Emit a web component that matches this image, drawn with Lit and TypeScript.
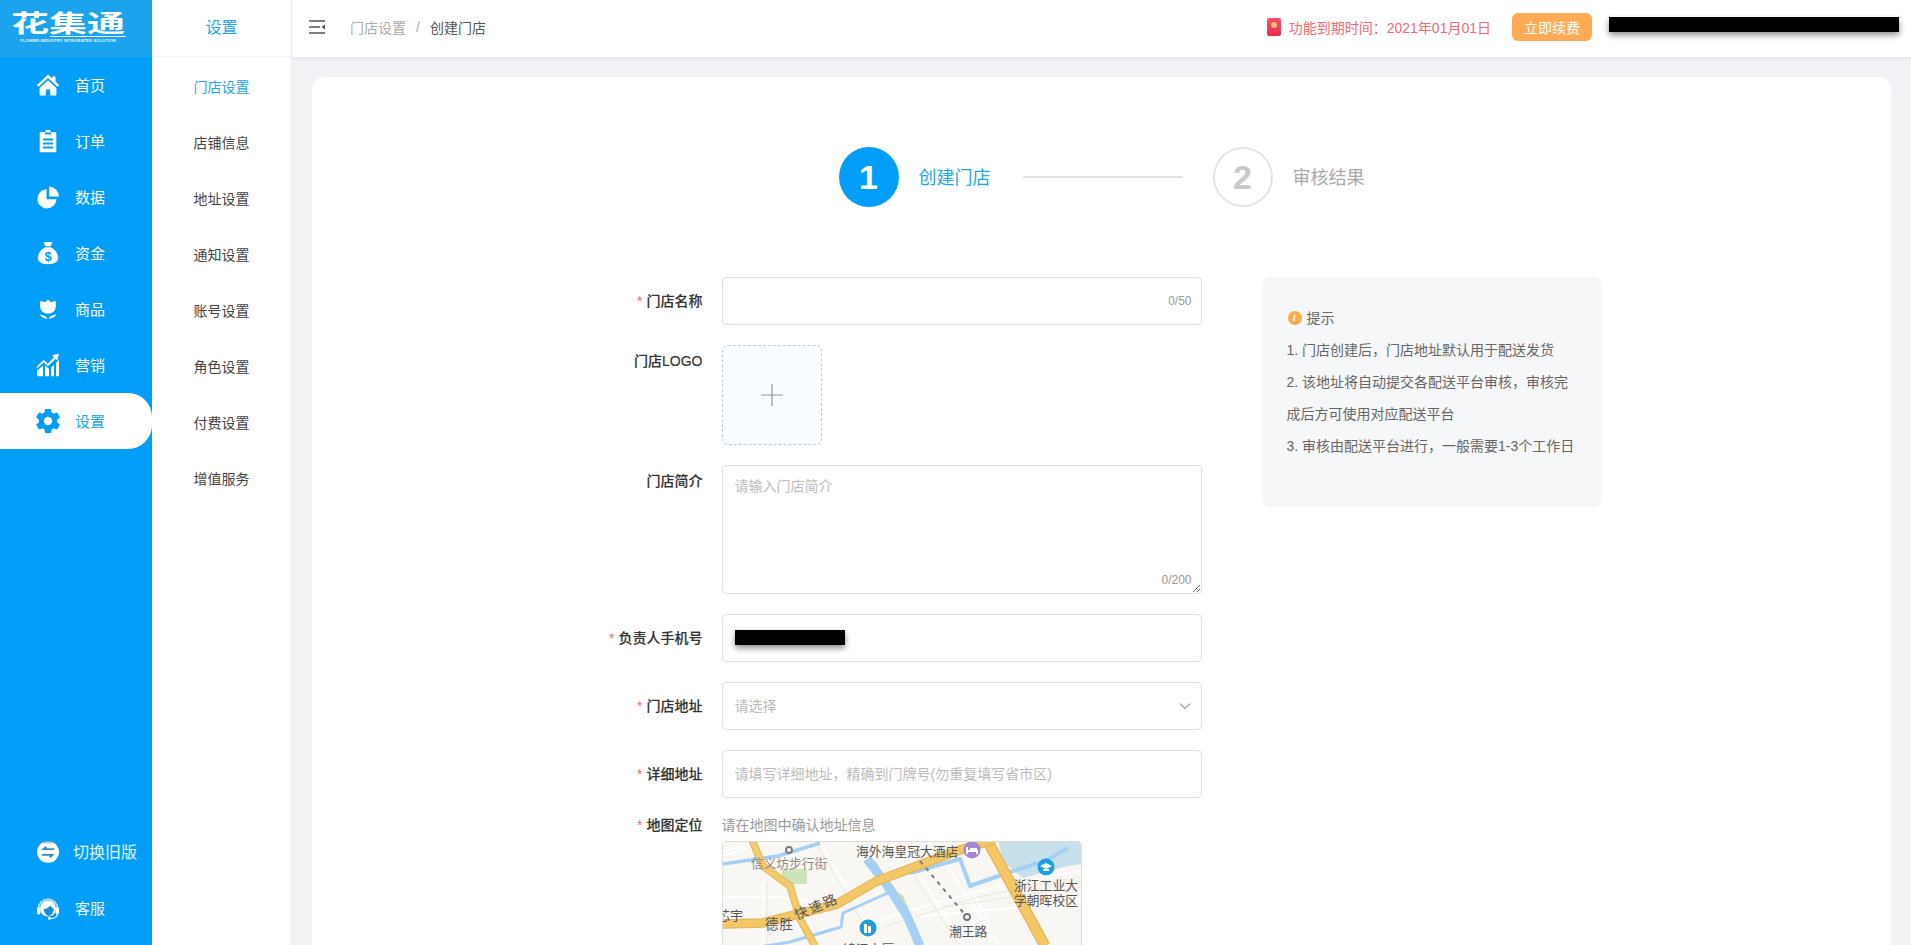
import { LitElement, html, css } from "lit";
import { customElement } from "lit/decorators.js";

const icons: Record<string, unknown> = {
  home: html`<svg viewBox="0 0 24 24" width="24" height="24" fill="#fff"><path d="M12 1.5 .8 12.2l1.7 1.6L12 5l9.5 8.8 1.7-1.6-3.7-3.6V3.4h-3.2v2.1z"/><path d="M12 7.3 3.6 15v6.4c0 .6.4 1 1 1h5.2v-6h4.4v6h5.2c.6 0 1-.4 1-1V15z"/></svg>`,
  order: html`<svg viewBox="0 0 24 24" width="24" height="24"><path fill="#fff" d="M9.5 3.2V2c0-.6.4-1 1-1h3c.6 0 1 .4 1 1v1.2h4.8c.6 0 1 .4 1 1v18c0 .6-.4 1-1 1H4.700c-.6 0-1-.4-1-1v-18c0-.6.4-1 1-1z"/><path stroke="#019ef9" stroke-width="1.800" d="M9 4.500h6M7 10.500h10M7 14.500h10M7 18.500h10" fill="none"/></svg>`,
  data: html`<svg viewBox="0 0 24 24" width="24" height="24" fill="#fff"><path d="M10.500 4.200a9.600 9.600 0 1 0 10 10h-10z"/><path d="M13 1.600v9.900h10A10.400 10.400 0 0 0 13 1.600z"/></svg>`,
  money: html`<svg viewBox="0 0 24 24" width="24" height="24"><path fill="#fff" d="M7.500 1h9l-1.800 4.200H9.300zM9 6.200h6c4 2.300 7.200 6.300 7.200 10.400 0 4.400-3.800 6.600-10.200 6.600S1.800 21 1.800 16.600C1.800 12.500 5 8.500 9 6.200z"/><text x="12" y="20.300" text-anchor="middle" font-family="Liberation Sans" font-weight="700" font-size="13" fill="#019ef9">$</text></svg>`,
  goods: html`<svg viewBox="0 0 24 24" width="24" height="24" fill="#fff"><path d="M12 2.500 15 5.200l4.500-1.400c.6 4 .6 7.400-.8 9.700-1.300 2-3.900 3.100-6.700 3.100s-5.400-1.100-6.700-3.100C3.900 11.200 3.900 7.800 4.500 3.800L9 5.200z"/><path d="M3.500 17.500c3 .2 5.800 1.300 7.500 3.300v1c-3-.4-5.800-1.900-7.500-4.300zM20.500 17.500c-3 .2-5.800 1.300-7.500 3.300v1c3-.4 5.800-1.900 7.500-4.300z"/></svg>`,
  market: html`<svg viewBox="0 0 24 24" width="24" height="24" fill="#fff"><path d="M23 .8 16 2.200l2 2-6.200 6.500-4-4L.8 13.400v2.400l7-6.500 4 4L19.700 5.800l1.700 1.700z"/><path d="M1 17.800 7 12.500v10.700H2a1 1 0 0 1-1-1zM9 12.500l4 3.300v7.400H9zM15 14.800l3-3v11.400h-3zM20 9.800l3-3v15.400a1 1 0 0 1-1 1h-2z"/></svg>`,
  gear: html`<svg viewBox="0 0 24 24" width="24" height="24" fill="#019ef9"><path d="M21.100 13.200a9.300 9.300 0 0 0 0-2.400l2.500-2a.7.7 0 0 0 .2-.8l-2.400-4.100a.7.7 0 0 0-.8-.3l-3 1.200a9 9 0 0 0-2-1.200L15.100.5a.6.600 0 0 0-.6-.5H9.600a.6.600 0 0 0-.6.500l-.5 3.100a9 9 0 0 0-2 1.200l-3-1.200a.6.600 0 0 0-.8.300L.3 8a.6.600 0 0 0 .2.800l2.500 2a9.300 9.300 0 0 0 0 2.400l-2.500 2a.7.7 0 0 0-.2.800l2.400 4.100c.2.300.5.400.8.300l3-1.200a9 9 0 0 0 2 1.200l.5 3.100c0 .3.300.5.600.5h4.900c.3 0 .6-.2.600-.5l.5-3.100a9 9 0 0 0 2-1.200l3 1.200c.3.100.6 0 .8-.3l2.400-4.100a.7.700 0 0 0-.2-.8zM12 16.200a4.200 4.200 0 1 1 0-8.400 4.200 4.200 0 0 1 0 8.400z"/></svg>`,
  swap: html`<svg viewBox="0 0 24 24" width="24" height="24"><defs><linearGradient id="sw" x1="0" y1="0" x2="0" y2="1"><stop offset="0" stop-color="#8c9aa5"/><stop offset=".15" stop-color="#fff"/><stop offset=".85" stop-color="#fff"/><stop offset="1" stop-color="#bdeeff"/></linearGradient></defs><circle cx="12" cy="12" r="11" fill="url(#sw)"/><path d="M18 9.200H7.500l2.800-2.600M6 14.800h10.500l-2.800 2.600" fill="none" stroke="#2a8fd0" stroke-width="1.800"/></svg>`,
  service: html`<svg viewBox="0 0 24 24" width="24" height="24"><path d="M2.300 13a9.700 9.700 0 0 1 19.400 0" fill="none" stroke="#cfe3ee" stroke-width="1.600"/><circle cx="12" cy="12.500" r="8" fill="#fff"/><path d="M7.800 13c2.600-.2 5-1.500 6.500-3.500 .8 1.500 2 2.600 3.500 3.200 0 3.800-2.400 6.800-5 7.300-2.700-.5-5-3.400-5-7z" fill="#1b8fd6"/><rect x="1" y="11" width="3.400" height="7.500" rx="1.600" fill="#fff"/><rect x="19.600" y="11" width="3.400" height="7.500" rx="1.600" fill="#fff"/><path d="M21.300 18.500c-.5 2.500-3.300 4-6.500 4" fill="none" stroke="#fff" stroke-width="1.200"/><circle cx="13.500" cy="22.300" r="1.500" fill="#fff"/></svg>`,
};

const NAV = [
  ["home", "首页"],
  ["order", "订单"],
  ["data", "数据"],
  ["money", "资金"],
  ["goods", "商品"],
  ["market", "营销"],
  ["gear", "设置"],
];
const SUB = ["门店设置", "店铺信息", "地址设置", "通知设置", "账号设置", "角色设置", "付费设置", "增值服务"];

const mapView = html`<svg class="map-svg" viewBox="0 0 360 300" width="360" height="300">
  <rect width="360" height="300" fill="#f9f7f3"/>
  <path d="M275 -2 L360 -2 L360 22 L345 24 L300 36 L280 20Z" fill="#c8e0ec"/>
  <g fill="none" stroke="#ffffff" stroke-width="2">
    <path d="M97 0 L150 90 L170 130"/><path d="M40 40 V130"/><path d="M0 55 L60 55 L120 62"/>
    <path d="M150 80 L250 50 L360 28"/><path d="M185 75 L360 60"/><path d="M195 30 L240 102"/><path d="M225 25 L275 102"/>
    <path d="M250 50 L265 80"/><path d="M285 45 L300 75"/><path d="M0 10 L30 0"/><path d="M0 14 L40 0"/>
  </g>
  <g fill="none" stroke="#ebe7de" stroke-width="1">
    <path d="M92 0 L145 90"/><path d="M44 40 V130"/><path d="M190 32 L235 102"/><path d="M160 85 L255 55 L360 34"/><path d="M220 65 L360 45"/>
  </g>
  <rect x="59" y="27" width="25" height="15" fill="#cfe3bb"/>
  <path d="M150 20 L165 48 L178 56 L196 100" fill="none" stroke="#c6e3a8" stroke-width="6"/>
  <g fill="none" stroke="#a5d0f5" stroke-linejoin="round">
    <path d="M0 22 L55 14 L97 1" stroke-width="3.500"/>
    <path d="M144 17 L167 47 L184 74 L197 104" stroke-width="9"/>
    <path d="M187 31 L237 17 L247 44 L284 31 L322 19 L345 6" stroke-width="4"/>
    <path d="M30 106 L67 100 L118 85 L120 71 L167 50" stroke-width="3"/>
  </g>
  <g fill="none" stroke-linecap="butt">
    <path d="M29 -2 L40 24 L67 44 L77 77 L92 104" stroke="#e3b354" stroke-width="7.500"/>
    <path d="M29 -2 L40 24 L67 44 L77 77 L92 104" stroke="#f3cb6c" stroke-width="5.500"/>
    <path d="M264 -2 L322 104" stroke="#e0ac4c" stroke-width="11"/>
    <path d="M264 -2 L322 104" stroke="#f3c766" stroke-width="9"/>
    <path d="M-2 82 L40 81 L114 62 L154 39 L234 9 L270 -2" stroke="#e3b354" stroke-width="9.500"/>
    <path d="M-2 82 L40 81 L114 62 L154 39 L234 9 L270 -2" stroke="#f3c766" stroke-width="7.500"/>
  </g>
  <path d="M197 19 L244 75" stroke="#7c7c7c" stroke-width="2" stroke-dasharray="4 5"/>
  <circle cx="66" cy="8" r="3" fill="#fff" stroke="#777" stroke-width="1.800"/>
  <circle cx="244" cy="75" r="3" fill="#fff" stroke="#777" stroke-width="1.800"/>
  <circle cx="249" cy="8" r="8.500" fill="#a884d8"/><path d="M244 5v7M244 9h10v3M247 7h7" stroke="#fff" stroke-width="2" fill="none"/>
  <circle cx="323" cy="25" r="8.500" fill="#1d9ee0"/><path d="M317 24l6-3 6 3-6 3zM320 27v2h6v-2" fill="#fff"/>
  <circle cx="145" cy="86" r="8.500" fill="#1a9fd8"/><path d="M141 91v-9h3v9zM145 91v-7h3v7z" fill="#fff"/>
  <g class="map-t">
    <text x="28" y="26" font-size="12.700" fill="#8a8a8a">信义坊步行街</text>
    <text x="133" y="14" font-size="12.800" fill="#555">海外海皇冠大酒店</text>
    <text x="226" y="94" font-size="12.800" fill="#555">潮王路</text>
    <text x="291" y="48" font-size="12.800" fill="#555">浙江工业大</text>
    <text x="291" y="63" font-size="12.800" fill="#555">学朝晖校区</text>
    <text x="-6" y="78" font-size="13" fill="#555">芯宇</text>
    <text x="42" y="87" font-size="13.500" fill="#555" letter-spacing="1">德胜</text>
    <text transform="translate(74 78) rotate(-23)" font-size="13.500" fill="#555" letter-spacing="2">快速路</text>
    <text x="120" y="112" font-size="12.800" fill="#555">锦江大厦</text>
  </g>
</svg>`;

@customElement("app-root")
export class AppRoot extends LitElement {
  static styles = css`
    :host { display: block; height: 100vh; overflow: hidden; font-family: "Liberation Sans", "Noto Sans CJK SC", sans-serif; color: #333; }
    * { box-sizing: border-box; }
    .app { display: flex; height: 100%; background: #f0f2f5; }
    .side { width: 152px; flex: none; background: #019ef9; display: flex; flex-direction: column; color: #fff; }
    .logo { height: 57px; flex: none; background: #1ca3ee; overflow: hidden; padding: 10px 0 0 11px; display: flex; flex-direction: column; }
    .logo-main { font: 700 38px/38px "Noto Sans CJK SC", sans-serif; transform: scaleY(.62); transform-origin: 50% 0; width: 116px; height: 25px; white-space: nowrap; }
    .logo-rule { height: 1px; width: 76px; background: #fff; margin: 1px 0 0 39px; }
    .logo-sub { font: 700 4.400px/6px "Liberation Sans", sans-serif; color: #dff3ff; white-space: nowrap; margin: 1px 0 0 9px; }
    .nav { flex: 1; }
    .item { height: 56px; display: flex; align-items: center; gap: 15px; padding-left: 36px; font-size: 15px; }
    .item span { padding-bottom: 2px; }
    .item svg { flex: none; }
    .item.on { background: #fff; color: #1fa6ef; border-radius: 0 24px 24px 0; }
    .bottom { padding-bottom: 9px; }
    .item.wide { font-size: 16px; gap: 13px; color: #e3f6ff; }
    .item.pale { color: #e3f6ff; }
    .sub { width: 140px; flex: none; background: #fff; border-right: 1px solid #f0f0f0; z-index: 1; }
    .sub-title { height: 57px; display: flex; align-items: center; justify-content: center; font-size: 16px; color: #1fa6ef; border-bottom: 1px solid #f2f3f5; margin-bottom: 2px; padding-bottom: 4px; }
    .sub-item { height: 56px; display: flex; align-items: center; justify-content: center; font-size: 14px; color: #444; padding-bottom: 2px; }
    .sub-item.on { color: #1fa6ef; }
    .right { flex: 1; min-width: 0; display: flex; flex-direction: column; height: 100%; }
    .head { height: 57px; flex: none; background: #fff; box-shadow: 0 1px 4px rgba(0, 0, 0, .08); display: flex; align-items: center; padding: 0 12px 3px 17px; font-size: 14px; z-index: 1; }
    .menu { display: block; margin-right: 25px; }
    .crumb-a { color: #aaa; }
    .crumb-s { color: #aaa; margin: 0 10px; }
    .crumb-b { color: #555; }
    .crumb-a, .crumb-s, .crumb-b, .expire { padding-bottom: 1px; }
    .grow { flex: 1; }
    .redbag { width: 14px; height: 18px; border-radius: 2px; background: linear-gradient(#f4526a, #ec2c4a); display: flex; justify-content: center; padding-top: 4px; margin-right: 8px; }
    .redbag i { width: 6px; height: 6px; border-radius: 50%; background: #f5c07a; }
    .expire { color: #ee6b77; }
    .renew { width: 80px; height: 28px; margin-left: 21px; border-radius: 6px; background: #ffab55; color: #fff; display: flex; align-items: center; justify-content: center; font-size: 14px; }
    .mask-top { width: 290px; height: 15px; margin: 0 0 5px 17px; background: #000; box-shadow: 0 3px 6px rgba(0, 0, 0, .45); }
    .main { flex: 1; min-height: 0; overflow: hidden; padding: 20px 20px 0; }
    .card { background: #fff; border-radius: 12px 12px 0 0; padding-top: 70px; min-height: 1000px; }
    .steps { display: flex; align-items: center; justify-content: center; height: 60px; margin-bottom: 70px; }
    .num { width: 60px; height: 60px; border-radius: 50%; display: flex; align-items: center; justify-content: center; font: 700 34px "Liberation Sans", sans-serif; }
    .num.a { background: #019ef9; color: #fff; }
    .num.b { border: 2px solid #e4e4e4; color: #c8c8c8; }
    .st { font-size: 18px; margin-left: 20px; padding-bottom: 2px; }
    .st.a { color: #1fa6ef; }
    .st.b { color: #aaa; }
    .line { width: 160px; height: 2px; background: #e2e2e2; margin: 0 30px 0 32px; }
    .body { width: 1000px; margin: 0 auto; display: flex; gap: 60px; align-items: flex-start; }
    .form { width: 600px; flex: none; display: flex; flex-direction: column; gap: 20px; }
    .row { display: flex; gap: 19px; }
    .label { width: 101px; flex: none; text-align: right; font-size: 14px; font-weight: 500; color: #333; line-height: 48px; -webkit-text-stroke: .15px #333; }
    .label.top { line-height: 32px; }
    .label.map { line-height: 14px; }
    .label em { font-style: normal; color: #f56c6c; margin-right: 4px; font-weight: 400; -webkit-text-stroke: 0; }
    .field { position: relative; width: 480px; height: 48px; }
    .field input, .field textarea { display: block; width: 100%; height: 100%; border: 1px solid #dcdfe6; border-radius: 4px; padding: 0 12px; font: inherit; font-size: 14px; background: #fff; color: #333; outline: none; }
    .field textarea { padding: 8px 12px; line-height: 24px; }
    .field.area { height: 129px; }
    input::placeholder, textarea::placeholder { color: #bbb; }
    .count { position: absolute; right: 10px; font-size: 12px; color: #999; }
    .count.c1 { top: 17px; }
    .count.c2 { bottom: 7px; }
    .upload { width: 100px; height: 100px; border: 1px dashed #c0ccda; border-radius: 6px; background: #fafdff; display: flex; align-items: center; justify-content: center; }
    .mask-phone { position: absolute; left: 13px; top: 16px; width: 110px; height: 15px; background: #000; box-shadow: 0 3px 6px rgba(0, 0, 0, .45); }
    .chev { position: absolute; right: 11px; top: 20px; display: block; pointer-events: none; }
    .hint { font-size: 14px; line-height: 14px; color: #999; }
    .mapcol { display: flex; flex-direction: column; gap: 9px; }
    .mapbox { width: 360px; height: 300px; border: 1px solid #ddd; border-radius: 4px; overflow: hidden; }
    .map-svg { display: block; font-family: "Noto Sans CJK SC", sans-serif; }
    .tip { width: 340px; height: 230px; flex: none; background: #f6f7f9; border-radius: 8px; padding: 25px 24px 0 25px; font-size: 14px; line-height: 32px; color: #666; }
    .tip-h { display: flex; align-items: center; gap: 5px; }
    .tip-i { width: 14px; height: 14px; border-radius: 50%; background: #f5ac4e; color: #fff; font: italic 700 10px/14px "Liberation Serif", serif; text-align: center; margin-left: 1px; flex: none; }
  `;

  render() {
    return html`<div class="app">
      <aside class="side">
        <div class="logo">
          <div class="logo-main">花集通</div>
          <div class="logo-rule"></div>
          <div class="logo-sub">FLOWER-INDUSTRY INTEGRATED SOLUTION</div>
        </div>
        <div class="nav">
          ${NAV.map(([k, t]) => html`<div class="item ${t === "设置" ? "on" : ""}">${icons[k]}<span>${t}</span></div>`)}
        </div>
        <div class="bottom">
          <div class="item wide">${icons.swap}<span>切换旧版</span></div>
          <div class="item pale">${icons.service}<span>客服</span></div>
        </div>
      </aside>
      <nav class="sub">
        <div class="sub-title">设置</div>
        ${SUB.map((t, i) => html`<div class="sub-item ${i === 0 ? "on" : ""}">${t}</div>`)}
      </nav>
      <div class="right">
        <header class="head">
          <svg class="menu" width="16" height="14" viewBox="0 0 16 14"><path d="M0 1h16M0 7h11M0 13h16" stroke="#555" stroke-width="1.500" fill="none"/><path d="M16 4.500v5l-3.500-2.500z" fill="#555"/></svg>
          <span class="crumb-a">门店设置</span><span class="crumb-s">/</span><span class="crumb-b">创建门店</span>
          <span class="grow"></span>
          <span class="redbag"><i></i></span>
          <span class="expire">功能到期时间：2021年01月01日</span>
          <span class="renew">立即续费</span>
          <span class="mask-top"></span>
        </header>
        <main class="main">
          <section class="card">
            <div class="steps">
              <div class="num a">1</div><div class="st a">创建门店</div>
              <div class="line"></div>
              <div class="num b">2</div><div class="st b">审核结果</div>
            </div>
            <div class="body">
              <div class="form">
                <div class="row">
                  <div class="label"><em>*</em>门店名称</div>
                  <div class="field"><input /><span class="count c1">0/50</span></div>
                </div>
                <div class="row">
                  <div class="label top">门店LOGO</div>
                  <div class="upload"><svg width="24" height="24" viewBox="0 0 24 24"><path d="M12 1v22M1 12h22" stroke="#8c939d" stroke-width="1.200" fill="none"/></svg></div>
                </div>
                <div class="row">
                  <div class="label top">门店简介</div>
                  <div class="field area"><textarea placeholder="请输入门店简介"></textarea><span class="count c2">0/200</span></div>
                </div>
                <div class="row">
                  <div class="label"><em>*</em>负责人手机号</div>
                  <div class="field"><input /><span class="mask-phone"></span></div>
                </div>
                <div class="row">
                  <div class="label"><em>*</em>门店地址</div>
                  <div class="field"><input placeholder="请选择" /><svg class="chev" width="12" height="8" viewBox="0 0 12 8"><path d="M1 1.500 6 6.500 11 1.500" stroke="#666" stroke-width="1" fill="none"/></svg></div>
                </div>
                <div class="row">
                  <div class="label"><em>*</em>详细地址</div>
                  <div class="field"><input placeholder="请填写详细地址，精确到门牌号(勿重复填写省市区)" /></div>
                </div>
                <div class="row">
                  <div class="label map"><em>*</em>地图定位</div>
                  <div class="mapcol"><div class="hint">请在地图中确认地址信息</div><div class="mapbox">${mapView}</div></div>
                </div>
              </div>
              <aside class="tip">
                <div class="tip-h"><span class="tip-i">i</span><span>提示</span></div>
                <div>1. 门店创建后，门店地址默认用于配送发货</div>
                <div>2. 该地址将自动提交各配送平台审核，审核完成后方可使用对应配送平台</div>
                <div>3. 审核由配送平台进行，一般需要1-3个工作日</div>
              </aside>
            </div>
          </section>
        </main>
      </div>
    </div>`;
  }
}
